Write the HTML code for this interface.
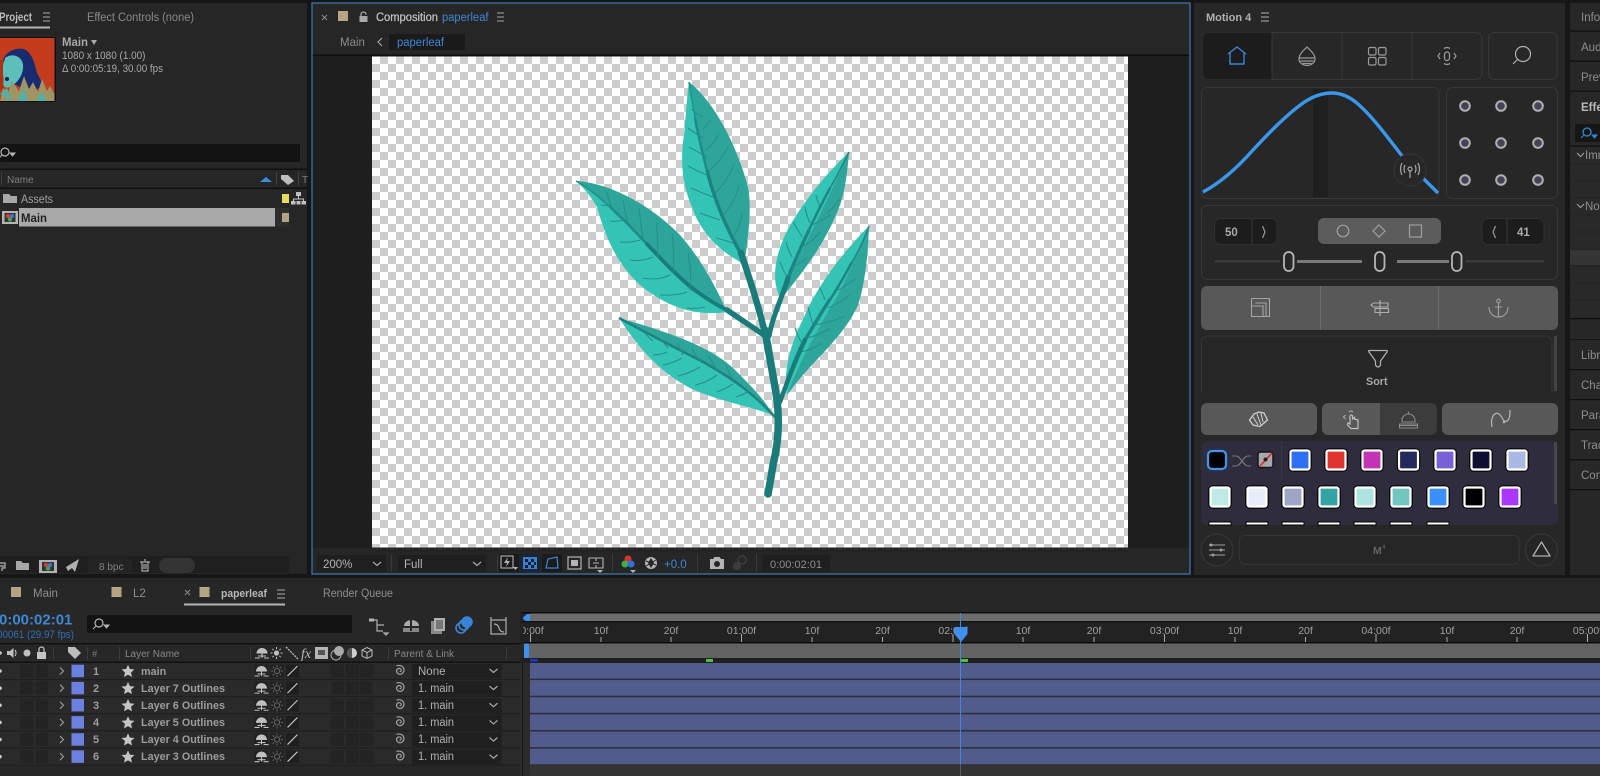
<!DOCTYPE html>
<html lang="en"><head><meta charset="utf-8"><title>After Effects – paperleaf</title>
<style>
html,body{margin:0;padding:0;background:#141414;width:1600px;height:776px;overflow:hidden}
#root{position:relative;width:1600px;height:776px;filter:blur(.35px)}
#root svg{position:absolute;left:0;top:0;display:block}
text{font-family:"Liberation Sans",sans-serif;font-size:11.5px;fill:#a8a8a8}
.b{font-weight:bold}
.s{fill:none;stroke:#b4b4b4;stroke-width:1.2}
.d{fill:none;stroke:#9a9a9a;stroke-width:1.2}
.tk{fill:#a0a0a0;font-size:10.5px;text-anchor:middle}
.hd{fill:#888;font-size:10px}
</style></head><body><div id="root">
<svg width="1600" height="776" viewBox="0 0 1600 776" xmlns="http://www.w3.org/2000/svg">
<defs>
<pattern id="chk" x="372" y="56" width="16" height="16" patternUnits="userSpaceOnUse"><rect width="16" height="16" fill="#fff"/><rect x="8" width="8" height="8" fill="#cdcdcd"/><rect y="8" width="8" height="8" fill="#cdcdcd"/></pattern>
<clipPath id="rulerclip"><rect x="523" y="622" width="1077" height="21"/></clipPath>
<symbol id="shy" viewBox="0 0 14 12" width="14" height="12" overflow="visible"><path d="M1.500 6.500A5.500 5.500 0 0 1 12.500 6.500Z" fill="#c0c0c0"/><path d="M7 1V11M3 9H11M0 11H5M9 11H14" stroke="#c0c0c0" stroke-width="1.100" fill="none"/></symbol>
<symbol id="sun" viewBox="0 0 12 12" width="12" height="12" overflow="visible"><circle cx="6" cy="6" r="2.600" fill="none" stroke="#666"/><path d="M6 0V2M6 10V12M0 6H2M10 6H12M1.800 1.800L3.200 3.200M8.800 8.800L10.200 10.200M1.800 10.200L3.200 8.800M8.800 3.200L10.200 1.800" stroke="#666"/></symbol>
<symbol id="spiral" viewBox="0 0 14 14" width="14" height="14" overflow="visible"><path d="M7 7.500C8.300 8 9.300 6.500 8.500 5.300C7.500 3.800 4.800 4.300 4.200 6.200C3.500 8.600 5.800 10.800 8.300 10.200C11 9.500 12.200 6.500 11 4C9.800 1.600 6.500 .8 4 2" fill="none" stroke="#a0a0a0" stroke-width="1.200"/></symbol>
<symbol id="chev" viewBox="0 0 10 6" width="10" height="6" overflow="visible"><path d="M1 1L5 4.500L9 1" fill="none" stroke="#aaa" stroke-width="1.200"/></symbol>
<g id="row">
<rect x="0" y="0" width="520" height="16" fill="#2a2a2a"/><rect x="0" y="16" width="520" height="1.130" fill="#1e1e1e"/>
<circle cx="0" cy="8" r="1.800" fill="#ccc"/>
<rect x="20" y="1.500" width="13" height="13" fill="#232323"/><rect x="36" y="1.500" width="12" height="13" fill="#232323"/>
<path d="M60 4.500L63.500 8L60 11.500" fill="none" stroke="#a0a0a0" stroke-width="1.100"/>
<rect x="71.500" y="1.700" width="12.500" height="12.500" fill="#6c80e2"/>
<path d="M128 1.800L129.900 6L134.500 6.500L131 9.500L132 14L128 11.700L124 14L125 9.500L121.500 6.500L126.100 6Z" fill="#c4c4c4"/>
<rect x="254" y="1.500" width="14" height="13" fill="#232323"/><use href="#shy" x="254.500" y="2"/>
<rect x="270" y="1.500" width="14" height="13" fill="#232323"/><use href="#sun" x="271" y="2"/>
<rect x="286" y="1.500" width="13" height="13" fill="#1f1f1f"/><path d="M287.500 13L297.500 3" stroke="#c0c0c0" stroke-width="1.200"/>
<rect x="331" y="1.500" width="13" height="13" fill="#232323"/><rect x="346" y="1.500" width="13" height="13" fill="#232323"/><rect x="360" y="1.500" width="13" height="13" fill="#232323"/>
<use href="#spiral" x="392.500" y="1"/>
<rect x="412" y="1" width="89.500" height="14.500" fill="#1f1f1f"/><use href="#chev" x="488.500" y="5"/>
</g>
</defs>

<!-- base -->
<rect width="1600" height="776" fill="#161616"/>

<!-- PROJECT PANEL -->
<g>
<rect x="0" y="3" width="307" height="571" fill="#262626"/>
<text x="-1" y="21" class="b" style="fill:#bcbcbc;font-size:11.500px" textLength="33" lengthAdjust="spacingAndGlyphs">Project</text>
<path d="M43 13H50M43 17H50M43 21H50" stroke="#a8a8a8" stroke-width="1.100"/>
<rect x="0" y="26.500" width="50" height="2" fill="#b4b4b4"/>
<text x="87" y="21" style="fill:#8a8a8a;font-size:11.500px" textLength="107" lengthAdjust="spacingAndGlyphs">Effect Controls (none)</text>
<!-- thumbnail -->
<rect x="0" y="37" width="56" height="65" fill="#0f0f0f"/>
<rect x="0" y="38" width="54.500" height="63" fill="#c43c1c"/>
<path d="M3 60C6 51 18 46 26 50C33 55 35 65 37 73L44 86L30 92L14 84Z" fill="#182a70"/>
<path d="M5 58C11 53 21 55 23 64C24 74 18 83 10 87C5 89 2 86 4 80L2 70Z" fill="#5cbfb9"/>
<rect x="0" y="60" width="3" height="30" fill="#a8351a"/>
<path d="M0 101L3 88L8 93L12 81L19 91L24 76L29 89L33 82L38 92L42 79L47 91L50 86L54.500 94V101Z" fill="#9f9463"/>
<path d="M0 94L7 88L12 101ZM17 101L24 88L28 101ZM36 101L41 92L47 101Z" fill="#52b0aa"/>
<circle cx="7" cy="79" r="2" fill="#10214f"/>
<text x="62" y="46" class="b" style="fill:#a8a8a8;font-size:11.500px" textLength="26" lengthAdjust="spacingAndGlyphs">Main</text>
<path d="M91 40H97L94 45Z" fill="#a8a8a8"/>
<text x="62" y="59" style="fill:#a8a8a8;font-size:11px" textLength="83.500" lengthAdjust="spacingAndGlyphs">1080 x 1080 (1.00)</text>
<text x="62" y="72" style="fill:#a8a8a8;font-size:11px" textLength="101" lengthAdjust="spacingAndGlyphs">Δ 0:00:05:19, 30.00 fps</text>
<rect x="0" y="144" width="300" height="18" rx="1.500" fill="#131313"/>
<circle cx="5" cy="152" r="4" class="d" style="stroke:#b5b5b5"/><path d="M2 155L-1 158M10 153H15L12.500 156Z" stroke="#b5b5b5" fill="#b5b5b5" stroke-width="1"/>
<rect x="0" y="168.500" width="307" height="1.500" fill="#101010"/>
<rect x="0" y="187.500" width="307" height="1.500" fill="#101010"/>
<rect x="1" y="172" width="1" height="14" fill="#3c3c3c"/>
<text x="7" y="183" style="fill:#7e7e7e;font-size:10px">Name</text>
<path d="M260 182L266 177L272 182Z" fill="#3b8ee0"/>
<rect x="276" y="172" width="1" height="14" fill="#404040"/>
<path d="M281 175L288 175L294 181L288 185L281 179Z" fill="#bdbdbd"/>
<rect x="298" y="172" width="1" height="14" fill="#404040"/>
<text x="302" y="183" style="fill:#7e7e7e;font-size:10px">T</text>
<!-- rows -->
<path d="M3 194H9L11 196H17V203H3Z" fill="#a8a8a8"/>
<text x="21" y="203" style="fill:#a0a0a0;font-size:11.500px" textLength="32" lengthAdjust="spacingAndGlyphs">Assets</text>
<rect x="282" y="194" width="7" height="9" fill="#e8d95a"/>
<rect x="296" y="192" width="5" height="4" fill="#c0c0c0"/><path d="M298.500 196V199M293.500 201V199H303.500V201" stroke="#c0c0c0" fill="none" stroke-width="1"/>
<rect x="291" y="201" width="4.500" height="3.500" fill="#c0c0c0"/><rect x="296.500" y="201" width="4" height="3.500" fill="#c0c0c0"/><rect x="301.500" y="201" width="4.500" height="3.500" fill="#c0c0c0"/>
<rect x="19" y="208" width="256" height="18.500" fill="#a9a9a9"/>
<rect x="275" y="208" width="14" height="18.500" fill="#2e2e2e"/>
<rect x="282" y="213" width="7" height="9" fill="#b3a283"/>
<rect x="2" y="211" width="16" height="13" fill="#b4b4b4"/><rect x="4.500" y="213" width="11" height="9" fill="#333"/>
<circle cx="8" cy="216" r="2.200" fill="#d23c33"/><circle cx="12" cy="216" r="2.200" fill="#3c74d2"/><circle cx="10" cy="219.500" r="2.200" fill="#3ca854"/>
<text x="21" y="222" class="b" style="fill:#222;font-size:11.500px" textLength="26" lengthAdjust="spacingAndGlyphs">Main</text>
<!-- bottom bar -->
<rect x="0" y="556" width="289" height="17" fill="#1f1f1f"/>
<path d="M-1 563H5V568H2V571M-1 566H4" class="s"/>
<path d="M16 561H21L23 563H29V570H16Z" fill="#a8a8a8"/>
<rect x="39" y="560" width="18" height="13" fill="#b0b0b0"/><rect x="42" y="562" width="12" height="9" fill="#333"/>
<circle cx="46" cy="565" r="2.200" fill="#d23c33"/><circle cx="50" cy="565" r="2.200" fill="#3c74d2"/><circle cx="48" cy="568.500" r="2.200" fill="#3ca854"/>
<path d="M66 567L79 559L75 572L72 568L68 571Z" fill="#b0b0b0"/>
<rect x="88" y="559" width="44" height="14" fill="#242424"/>
<text x="99" y="570" style="fill:#808080;font-size:10px">8 bpc</text>
<path d="M140 562H150M142 562V571H148V562M144 560H146M144 564V569M146 564V569" class="s" style="stroke:#aaa"/>
<rect x="159" y="558" width="36" height="15" rx="7.500" fill="#343434"/>
</g>

<!-- COMPOSITION PANEL -->
<g>
<rect x="312" y="3" width="878" height="571" fill="#1e1e1e"/>
<rect x="312" y="3" width="878" height="52" fill="#262626"/>
<rect x="312" y="54.500" width="878" height="1.500" fill="#0e0e0e"/>
<path d="M322 15L327 20M327 15L322 20" stroke="#8a8a8a" stroke-width="1"/>
<rect x="338" y="11" width="10" height="10" fill="#b5a585"/>
<path d="M361 17V14.500A2.500 2.500 0 0 1 366 14.500" fill="none" stroke="#a8a8a8" stroke-width="1.300"/><rect x="359.500" y="16" width="8" height="6" fill="#a8a8a8"/>
<text x="376" y="21" style="fill:#c0c0c0;stroke:#c0c0c0;stroke-width:.25;font-size:11.500px" textLength="62" lengthAdjust="spacingAndGlyphs">Composition</text>
<text x="442" y="21" style="fill:#3e87d4;font-size:11.500px" textLength="46.500" lengthAdjust="spacingAndGlyphs">paperleaf</text>
<path d="M497 13H504M497 17H504M497 21H504" stroke="#a8a8a8" stroke-width="1.100"/>
<text x="340" y="46" style="fill:#8a8a8a;font-size:11.500px">Main</text>
<path d="M382 38L378 42L382 46" fill="none" stroke="#a8a8a8" stroke-width="1.100"/>
<rect x="389" y="34" width="76" height="16" fill="#1a1a1a"/>
<text x="397" y="46" style="fill:#3e87d4;font-size:11.500px" textLength="47" lengthAdjust="spacingAndGlyphs">paperleaf</text>
<!-- canvas -->
<rect x="372" y="56.500" width="756" height="491" fill="url(#chk)"/>
<!-- leaves -->
<g>
<!-- top leaf -->
<path d="M689 82C712 100 735 140 748 187C751 205 750 228 744 264C720 252 700 232 692 207C682 185 680 160 684 135C686 115 687 95 689 82Z" fill="#34c4b6"/>
<path d="M689 82C712 100 735 140 748 187C751 205 750 228 744 264C730 240 718 210 708 175C700 145 694 110 689 82Z" fill="#2ea59b"/>
<path d="M689 82C691 95 693 108 696 122" fill="none" stroke="#22908b" stroke-width="1.500"/>
<path d="M695 118C698 135 703 155 708 175" fill="none" stroke="#1f8a86" stroke-width="2.500"/>
<path d="M707 170C714 200 728 232 742 255" fill="none" stroke="#1d8380" stroke-width="3.500"/>
<g fill="none" stroke="#249089" stroke-width="1.100">
<path d="M703 117Q697 114 691 109M704 138Q696 134 688 128M707 157Q698 152 689 147M707 175Q697 171 688 166M713 197Q702 193 691 188M720 220Q708 216 700 213M733 243Q724 240 716 238M703 130Q707 125 710 120M706 150Q715 143 719 133M708 172Q720 162 728 147M715 193Q729 180 734 163M723 215Q735 203 739 185M733 237Q741 225 742 213"/>
</g>
<!-- left leaf -->
<path d="M576 181C610 183 650 205 680 235C700 258 715 285 727 312C700 316 670 310 640 285C615 262 605 235 597 207C590 195 583 187 576 181Z" fill="#34c4b6"/>
<path d="M576 181C610 183 650 205 680 235C700 258 715 285 727 312L690 290C670 270 650 250 627 225C610 208 590 190 576 181Z" fill="#2ea59b"/>
<path d="M576 181C590 189 602 199 612 209" fill="none" stroke="#22908b" stroke-width="1.500"/>
<path d="M610 207C620 216 632 228 648 245" fill="none" stroke="#1f8a86" stroke-width="2.500"/>
<path d="M646 243C664 262 690 292 727 310" fill="none" stroke="#1a7c7a" stroke-width="3.800"/>
<g fill="none" stroke="#249089" stroke-width="1.100">
<path d="M615 213Q609 204 607 192M628 223Q625 212 623 200M643 240Q641 225 639 208M658 257Q658 240 656 222M673 273Q675 255 672 233M690 290Q692 275 688 253M612 205Q607 206 601 205M623 220Q617 222 610 221M640 240Q630 243 620 242M653 257Q641 262 630 260M670 275Q658 281 643 278M687 292Q675 296 660 295M705 307Q697 309 687 308"/>
</g>
<!-- upper right leaf -->
<path d="M849 152C847 175 845 190 840 205C826 242 806 268 781 299C772 284 773 262 785 235C800 205 825 175 849 152Z" fill="#34c4b6"/>
<path d="M849 152C847 175 845 190 840 205C826 242 806 268 781 299L790 275C805 245 830 195 849 152Z" fill="#2ea59b"/>
<!-- lower right leaf -->
<path d="M869 226C868 250 866 280 858 305C842 340 812 360 787 395C783 370 790 345 805 315C820 280 850 245 869 226Z" fill="#34c4b6"/>
<path d="M869 226C868 250 866 280 858 305C842 340 812 360 787 395C800 360 820 325 838 295C850 270 862 245 869 226Z" fill="#2ea59b"/>
<g fill="none" stroke="#249089" stroke-width="1.100">
<path d="M820 207Q817 200 816 195M810 223Q806 214 805 207M802 237Q797 228 793 222M792 257Q788 250 786 242M787 277Q783 270 780 262M827 213Q835 207 840 198M812 225Q823 220 830 215M800 247Q812 243 820 232M793 267Q802 262 807 258"/>
<path d="M825 300Q822 292 820 288M813 325Q810 315 808 307M803 345Q797 335 795 328M838 290Q848 285 856 278M828 308Q840 303 850 295M815 325Q832 322 845 316M807 338Q820 335 830 328M800 352Q812 350 822 343"/>
</g>
<!-- bottom left leaf -->
<path d="M619 318C660 330 710 345 735 370C750 385 765 400 773 415C745 405 715 400 690 388C660 372 640 350 619 318Z" fill="#34c4b6"/>
<path d="M619 318C660 330 710 345 735 370C750 385 765 400 773 415C755 395 735 380 705 363C680 350 650 335 619 318Z" fill="#2ea59b"/>
<path d="M619 318C650 335 680 350 705 363C735 380 755 395 775 417" fill="none" stroke="#1d8380" stroke-width="2.600"/>
<g fill="none" stroke="#249089" stroke-width="1.100">
<path d="M653 341Q648 337 645 333M668 348Q663 342 660 338M683 355Q680 348 677 343M702 363Q695 356 692 348M718 372Q712 362 708 355M733 380Q728 372 726 365M667 352Q660 355 653 355M682 358Q673 363 663 365M700 367Q690 373 678 376M717 375Q706 383 695 385M733 384Q725 389 717 392M747 392Q743 395 736 397"/>
</g>
<!-- midribs and stems on top, tapered by stroke width -->
<g fill="none" stroke="#1f8582">
<path d="M849 152C842 166 836 178 829 190" stroke-width="1.500"/>
<path d="M830 188C823 201 815 217 808 232" stroke-width="2.500"/>
<path d="M809 230C802 245 794 262 788 278" stroke-width="3.500"/>
<path d="M869 226C864 240 858 252 851 264" stroke-width="1.500"/>
<path d="M852 262C845 275 838 288 829 301" stroke-width="2.500"/>
<path d="M830 299C822 312 812 328 805 340" stroke-width="3.500"/>
</g>
<g fill="none" stroke="#1a7c7a" stroke-linecap="round">
<path d="M788 278C782 298 773 315 769 336" stroke-width="5"/>
<path d="M805 340C795 360 786 385 780 402" stroke-width="4.500"/>
<path d="M727 310L767 337" stroke-width="5.500"/>
<path d="M741 253C750 280 760 310 766 338" stroke-width="6.500"/>
<path d="M765 330C770 360 775 385 777 400C780 425 778 445 773 465C771 478 769 488 768 494" stroke-width="7.500"/>
</g>
</g>
<!-- toolbar -->
<rect x="312" y="548" width="878" height="26" fill="#262626"/>
<rect x="317" y="555" width="69" height="17" rx="1" fill="#1f1f1f"/>
<text x="323" y="568" style="fill:#b4b4b4;font-size:11.500px">200%</text><use href="#chev" x="372" y="561"/>
<rect x="391" y="555" width="1" height="17" fill="#3a3a3a"/>
<rect x="398" y="555" width="88" height="17" rx="1" fill="#1f1f1f"/>
<text x="404" y="568" style="fill:#b4b4b4;font-size:11.500px">Full</text><use href="#chev" x="472" y="561"/>
<rect x="497" y="554" width="1" height="18" fill="#3a3a3a"/>
<rect x="499" y="554" width="20" height="18" fill="#1a1a1a"/><rect x="501" y="556" width="12" height="12" fill="none" stroke="#b4b4b4" stroke-width="1.100"/><path d="M508 557L504 563H507L506 567L510 561H507Z" fill="#b4b4b4"/><path d="M513 567H518L515.500 570Z" fill="#b4b4b4"/>
<rect x="520" y="554" width="21" height="18" fill="#1a2432"/><rect x="523" y="557" width="14" height="12" fill="#3c7fd0"/><path d="M525 559h3v3h-3zM531 559h3v3h-3zM528 562h3v3h-3zM534 562h2v3h-2zM525 565h3v3h-3zM531 565h3v3h-3z" fill="#16202c"/>
<rect x="542" y="554" width="20" height="18" fill="#1a1a1a"/><path d="M546 568L548 559L557 557L558 568Z" fill="none" stroke="#3c7fd0" stroke-width="1.300"/>
<rect x="568" y="557" width="13" height="12" fill="none" stroke="#b4b4b4" stroke-width="1.200"/><rect x="571" y="560" width="7" height="6" fill="#b4b4b4"/>
<path d="M589 558H603V568H589ZM596 558V561M596 565V568M593 563H599" fill="none" stroke="#b4b4b4" stroke-width="1.100"/><path d="M597 570H603L600 573Z" fill="#b4b4b4"/>
<rect x="612" y="554" width="1" height="18" fill="#3a3a3a"/>
<circle cx="628" cy="559" r="3.500" fill="#d8352e"/><circle cx="625" cy="564" r="3.500" fill="#3fae49"/><circle cx="631" cy="564" r="3.500" fill="#2b6fe0"/><path d="M630 570H636L633 573Z" fill="#b4b4b4"/>
<circle cx="651" cy="563" r="6" fill="#b4b4b4"/><path d="M651 558L654 563L651 568L648 563Z" fill="#262626"/><path d="M646 561L656 565M656 560L646 566" stroke="#262626"/>
<text x="664" y="568" style="fill:#3e87d4;font-size:11.500px">+0.0</text>
<rect x="697" y="554" width="1" height="18" fill="#3a3a3a"/>
<path d="M710 559H713L714.500 557H719.500L721 559H724V569H710Z" fill="#b4b4b4"/><circle cx="717" cy="564" r="3" fill="#262626"/>
<circle cx="742" cy="560" r="4" fill="none" stroke="#3d3d3d" stroke-width="1.500"/><circle cx="737" cy="566" r="4" fill="#3d3d3d"/>
<rect x="756" y="554" width="1" height="18" fill="#3a3a3a"/>
<rect x="762.500" y="555" width="67.500" height="17" fill="#1f1f1f"/>
<text x="770" y="568" style="fill:#8e8e8e;font-size:11px">0:00:02:01</text>
<!-- blue focus frame -->
<rect x="312" y="3" width="878" height="571" fill="none" stroke="#3d72b0" stroke-width="1.300"/>
</g>

<!-- MOTION PANEL -->
<g>
<rect x="1194" y="3" width="371" height="572" fill="#272727"/>
<text x="1206" y="21" class="b" style="fill:#b0b0b0;font-size:11px">Motion 4</text>
<path d="M1261 13H1269M1261 17H1269M1261 21H1269" stroke="#b0b0b0" stroke-width="1.100"/>
<!-- nav -->
<rect x="1202.500" y="32.500" width="279.500" height="47" rx="6" fill="#272727" stroke="#383838"/>
<path d="M1202.500 38.500a6 6 0 0 1 6-6H1272V79.500H1208.500a6 6 0 0 1-6-6Z" fill="#1c1c1c"/>
<path d="M1272 33V79M1342 33V79M1412 33V79" stroke="#383838"/>
<path d="M1228 54L1237 47L1246 54M1230 53V64H1244V53" fill="none" stroke="#3a84d8" stroke-width="1.400"/>
<path d="M1307 47C1304 50 1299 54 1299 59A8 6.500 0 0 0 1315 59C1315 54 1310 50 1307 47Z" class="d"/><path d="M1299.500 58H1314.500M1300.500 61H1313.500M1302.500 63.500H1311.500" class="d"/>
<rect x="1368.500" y="47.500" width="7.500" height="7.500" rx="1.500" class="d"/><rect x="1378.500" y="47.500" width="7.500" height="7.500" rx="1.500" class="d"/><rect x="1368.500" y="57.500" width="7.500" height="7.500" rx="1.500" class="d"/><rect x="1378.500" y="57.500" width="7.500" height="7.500" rx="1.500" class="d"/>
<rect x="1444.500" y="52" width="5" height="8.500" rx="2.500" class="d"/><path d="M1440 53L1438 56L1440 59M1454 53L1456 56L1454 59M1444 48.500Q1447 46.500 1450 48.500M1444 63.500Q1447 65.500 1450 63.500" class="d"/>
<rect x="1488.500" y="32.500" width="68.500" height="47" rx="6" fill="#272727" stroke="#383838"/>
<circle cx="1523" cy="54" r="7.500" class="s" style="stroke:#b0b0b0"/><path d="M1517.500 59.500L1513 64" class="s" style="stroke:#b0b0b0"/>
<!-- graph -->
<rect x="1201.500" y="87.500" width="237.500" height="111" rx="6" fill="#272727" stroke="#383838"/>
<rect x="1313" y="89" width="15" height="108" fill="#1f1f1f"/>
<path d="M1203 192C1220 183 1237 168 1253 150C1268 134 1285 116 1303 103C1313 96 1323 93 1332 93C1342 93 1350 97 1358 104C1375 119 1390 141 1403 157C1414 170 1427 182 1438 193" fill="none" stroke="#3a97ea" stroke-width="3.400"/>
<circle cx="1410" cy="170" r="16" fill="#272727" stroke="#363636"/>
<circle cx="1410" cy="169" r="2" class="d" style="stroke:#a8a8a8"/><path d="M1410 171V178M1405 165Q1403 169 1405 173M1415 165Q1417 169 1415 173M1402 163Q1399 169 1402 175M1418 163Q1421 169 1418 175" class="d" style="stroke:#a8a8a8"/>
<rect x="1446.500" y="87.500" width="111" height="111" rx="6" fill="#272727" stroke="#383838"/>
<g fill="#454258" stroke="#b0b0b0" stroke-width="2">
<circle cx="1465" cy="106" r="4.800"/><circle cx="1501" cy="106" r="4.800"/><circle cx="1538" cy="106" r="4.800"/>
<circle cx="1465" cy="143" r="4.800"/><circle cx="1501" cy="143" r="4.800"/><circle cx="1538" cy="143" r="4.800"/>
<circle cx="1465" cy="180" r="4.800"/><circle cx="1501" cy="180" r="4.800"/><circle cx="1538" cy="180" r="4.800"/>
</g>
<!-- sliders -->
<rect x="1201.500" y="205.500" width="356" height="74" rx="6" fill="#272727" stroke="#383838"/>
<rect x="1214.500" y="218.500" width="62.500" height="26" rx="6" fill="#1c1c1c" stroke="#303030"/>
<path d="M1252 219V244" stroke="#383838"/><text x="1225" y="236" class="b" style="fill:#aaa;font-size:11.500px">50</text><path d="M1262.500 226L1265 232L1262.500 238" class="d"/>
<rect x="1318" y="218" width="123" height="26" rx="6" fill="#5c5c5c"/>
<circle cx="1343" cy="231" r="5.800" fill="none" stroke="#a0a0a0" stroke-width="1.200"/>
<path d="M1379 225L1385 231L1379 237L1373 231Z" fill="none" stroke="#a0a0a0" stroke-width="1.200"/>
<rect x="1409.500" y="225" width="12" height="12" fill="none" stroke="#a0a0a0" stroke-width="1.200"/>
<rect x="1482" y="218.500" width="62" height="26" rx="6" fill="#1c1c1c" stroke="#303030"/>
<path d="M1507 219V244" stroke="#383838"/><path d="M1495.500 226L1493 232L1495.500 238" class="d"/><text x="1517" y="236" class="b" style="fill:#aaa;font-size:11.500px">41</text>
<rect x="1215" y="260" width="65" height="2.500" fill="#3c3c3c"/>
<rect x="1297" y="260" width="65" height="3" fill="#7a7a7a"/>
<rect x="1397" y="260" width="52" height="3" fill="#7a7a7a"/>
<rect x="1466" y="260" width="78" height="2.500" fill="#3c3c3c"/>
<rect x="1284" y="252" width="9.500" height="19" rx="4.700" fill="none" stroke="#b5b5b5" stroke-width="1.800"/>
<rect x="1375" y="252" width="9.500" height="19" rx="4.700" fill="none" stroke="#b5b5b5" stroke-width="1.800"/>
<rect x="1452" y="252" width="9.500" height="19" rx="4.700" fill="none" stroke="#b5b5b5" stroke-width="1.800"/>
<!-- 3 buttons -->
<rect x="1201" y="286" width="357" height="44" rx="6" fill="#585858"/>
<path d="M1320.500 286V330M1438.500 286V330" stroke="#6c6c6c"/>
<path d="M1251.500 299.500Q1251.500 298.500 1252.500 298.500H1269.500V316.500H1251.500ZM1251.500 306H1263V316.500M1255.500 303H1266V316.500" fill="none" stroke="#a4a4a4" stroke-width="1.100"/>
<path d="M1380 300V316M1373.500 303H1388V307H1373.500L1371 305ZM1375 308.500H1388.500V312.500H1375Z" fill="none" stroke="#b0b0b0" stroke-width="1.100"/>
<circle cx="1498.500" cy="301" r="1.800" fill="none" stroke="#a0a0a0" stroke-width="1.100"/><path d="M1498.500 303V317M1495 307H1502M1489 307C1489 313 1493 317 1498.500 317C1504 317 1508 313 1508 307" fill="none" stroke="#a0a0a0" stroke-width="1.100"/>
<!-- sort -->
<path d="M1201.500 392V342a6 6 0 0 1 6-6H1546a6 6 0 0 1 6 6V392" fill="#262626" stroke="#353535"/>
<rect x="1554" y="336" width="3" height="55" fill="#474241"/>
<path d="M1369 350.500H1386.500Q1388 350.500 1387 352L1380.500 361V365Q1378 369 1375.500 365V361L1369 352Q1368 350.500 1369 350.500Z" fill="none" stroke="#b0b0b0" stroke-width="1.200"/>
<text x="1366" y="385" class="b" style="fill:#a8a8a8;font-size:10.800px">Sort</text>
<!-- three row -->
<rect x="1201" y="403" width="116" height="32" rx="6" fill="#585858"/>
<path d="M1249.500 420L1254 414L1259 412L1264 413L1267.500 420L1260 426.500L1253 425Z" fill="none" stroke="#d0d0d0" stroke-width="1.300" stroke-linejoin="round"/><path d="M1253 417L1258 425M1257 414L1261 425M1261 413L1263 422" stroke="#d0d0d0" stroke-width="1" fill="none"/>
<rect x="1322" y="403" width="115" height="32" rx="6" fill="#3c3c3c"/>
<path d="M1328 403H1380V435H1328a6 6 0 0 1-6-6V409a6 6 0 0 1 6-6Z" fill="#585858"/>
<path d="M1345.500 415L1343.500 417L1345.500 419M1349 412Q1351 410 1353 412" fill="none" stroke="#b0b0b0" stroke-width="1"/>
<path d="M1350 416V424L1348 423L1347.500 425L1351 428.500H1358V420L1354.500 419V417.500L1352.500 419V416Q1351 414 1350 416Z" fill="none" stroke="#c0c0c0" stroke-width="1.200"/>
<path d="M1402 420.500A6.500 6.500 0 0 1 1415 420.500V422H1402ZM1400 425.500H1417M1399.500 428H1417.500V424H1399.500ZM1408.500 414V411.500" fill="none" stroke="#8c8c8c" stroke-width="1.100"/>
<rect x="1442" y="403" width="116" height="32" rx="6" fill="#585858"/>
<path d="M1492 427C1490 417 1495 411 1499 414C1503 417 1503 423 1507 421C1510 419 1510 414 1510 410" fill="none" stroke="#b0b0b0" stroke-width="1.300"/><circle cx="1504" cy="422" r="1.300" fill="#b0b0b0"/>
<!-- swatch area -->
<path d="M1201 447a6 6 0 0 1 6-6H1552a6 6 0 0 1 6 6V519a6 6 0 0 1-6 6H1207a6 6 0 0 1-6-6Z" fill="#2f2c3d"/>
<rect x="1554" y="442" width="3" height="62" fill="#4a4648"/>
<rect x="1208" y="451" width="18" height="18" rx="4" fill="#000" stroke="#3d97ee" stroke-width="2.200"/>
<path d="M1232 456H1236C1241 456 1243 466 1248 466H1251M1232 466H1236C1241 466 1243 456 1248 456H1251" fill="none" stroke="#757575" stroke-width="1.100"/>
<rect x="1258" y="452" width="15" height="15.500" rx="2.500" fill="#a8a8ad" stroke="#161616" stroke-width="1.500"/><path d="M1260 466L1272 453" stroke="#d82a2a" stroke-width="1.500"/><circle cx="1265.500" cy="459.500" r="2" fill="#222"/>
<rect x="1281" y="441" width="1" height="38" fill="#3a3748"/>
<g fill="none" stroke="#000" stroke-width="1.500">
<rect x="1289" y="449" width="22" height="22" rx="4"/><rect x="1325" y="449" width="22" height="22" rx="4"/><rect x="1361" y="449" width="22" height="22" rx="4"/><rect x="1397.500" y="449" width="22" height="22" rx="4"/><rect x="1434" y="449" width="22" height="22" rx="4"/><rect x="1470" y="449" width="22" height="22" rx="4"/><rect x="1506" y="449" width="22" height="22" rx="4"/>
<rect x="1209" y="486" width="22" height="22" rx="4"/><rect x="1246" y="486" width="22" height="22" rx="4"/><rect x="1282" y="486" width="22" height="22" rx="4"/><rect x="1318" y="486" width="22" height="22" rx="4"/><rect x="1354" y="486" width="22" height="22" rx="4"/><rect x="1390" y="486" width="22" height="22" rx="4"/><rect x="1427" y="486" width="22" height="22" rx="4"/><rect x="1463" y="486" width="22" height="22" rx="4"/><rect x="1499" y="486" width="22" height="22" rx="4"/>
</g>
<g stroke="#fff" stroke-width="2.200">
<rect x="1290.500" y="450.500" width="19" height="19" rx="2" fill="#2f6ff5"/>
<rect x="1326.500" y="450.500" width="19" height="19" rx="2" fill="#e0342e"/>
<rect x="1362.500" y="450.500" width="19" height="19" rx="2" fill="#c234b4"/>
<rect x="1399" y="450.500" width="19" height="19" rx="2" fill="#232a5c"/>
<rect x="1435.500" y="450.500" width="19" height="19" rx="2" fill="#7a60d8"/>
<rect x="1471.500" y="450.500" width="19" height="19" rx="2" fill="#0c0f33"/>
<rect x="1507.500" y="450.500" width="19" height="19" rx="2" fill="#aab8e6"/>
<rect x="1210.500" y="487.500" width="19" height="19" rx="2" fill="#bfeae6"/>
<rect x="1247.500" y="487.500" width="19" height="19" rx="2" fill="#e9ecf9"/>
<rect x="1283.500" y="487.500" width="19" height="19" rx="2" fill="#9ea4c6"/>
<rect x="1319.500" y="487.500" width="19" height="19" rx="2" fill="#35a3a3"/>
<rect x="1355.500" y="487.500" width="19" height="19" rx="2" fill="#aee4df"/>
<rect x="1391.500" y="487.500" width="19" height="19" rx="2" fill="#72c6c0"/>
<rect x="1428.500" y="487.500" width="19" height="19" rx="2" fill="#3a8ff8"/>
<rect x="1464.500" y="487.500" width="19" height="19" rx="2" fill="#000"/>
<rect x="1500.500" y="487.500" width="19" height="19" rx="2" fill="#a938fb"/>
</g>
<g fill="#fff" stroke="#000"><rect x="1209" y="522" width="22" height="3"/><rect x="1246" y="522" width="22" height="3"/><rect x="1282" y="522" width="22" height="3"/><rect x="1318" y="522" width="22" height="3"/><rect x="1354" y="522" width="22" height="3"/><rect x="1390" y="522" width="22" height="3"/><rect x="1427" y="522" width="22" height="3"/></g>
<!-- footer -->
<circle cx="1217" cy="550" r="16" fill="#262626" stroke="#3a3a3a"/>
<path d="M1209 545H1225M1209 550H1225M1209 555H1225" stroke="#a0a0a0" stroke-width="1.100"/><circle cx="1211" cy="545" r="1.500" fill="#a0a0a0"/><circle cx="1221" cy="550" r="1.500" fill="#a0a0a0"/><circle cx="1213" cy="555" r="1.500" fill="#a0a0a0"/>
<rect x="1239.500" y="535.500" width="279.500" height="29" rx="6" fill="#262626" stroke="#363636"/>
<text x="1373" y="554" class="b" style="fill:#656565;font-size:10.500px">M</text><text x="1382" y="549" style="fill:#656565;font-size:6px">4</text>
<circle cx="1541.500" cy="550" r="16" fill="#262626" stroke="#3a3a3a"/>
<path d="M1541.500 542L1533 556H1550Z" fill="none" stroke="#b0b0b0" stroke-width="1.300" stroke-linejoin="round"/>
</g>

<!-- RIGHT TAB COLUMN -->
<g>
<rect x="1570" y="3" width="30" height="572" fill="#272727"/>
<g fill="#0f0f0f"><rect x="1570" y="30.500" width="30" height="1.300"/><rect x="1570" y="60.500" width="30" height="1.300"/><rect x="1570" y="90.500" width="30" height="1.300"/><rect x="1570" y="145.500" width="30" height="1.300"/><rect x="1570" y="318" width="30" height="1.300"/><rect x="1570" y="339" width="30" height=".8"/><rect x="1570" y="369" width="30" height="1.300"/><rect x="1570" y="399" width="30" height="1.300"/><rect x="1570" y="429" width="30" height="1.300"/><rect x="1570" y="459" width="30" height="1.300"/><rect x="1570" y="489" width="30" height="1.300"/></g>
<text x="1581" y="21" style="fill:#8e8e8e;font-size:11.500px">Info</text>
<text x="1581" y="51" style="fill:#8e8e8e;font-size:11.500px">Audio</text>
<text x="1581" y="81" style="fill:#8e8e8e;font-size:11.500px">Preview</text>
<text x="1581" y="111" class="b" style="fill:#b8b8b8;font-size:11.500px">Effects</text>
<rect x="1575" y="124" width="25" height="18" fill="#161616"/>
<circle cx="1587" cy="132" r="4" fill="none" stroke="#3a84d8" stroke-width="1.300"/><path d="M1584 135L1581 138M1592 135H1597L1594.500 138Z" stroke="#3a84d8" fill="#3a84d8"/>
<rect x="1570" y="147" width="30" height="170" fill="#292929"/>
<path d="M1570 164H1600M1570 181H1600M1570 198H1600M1570 215H1600M1570 232H1600M1570 249H1600M1570 266H1600M1570 283H1600M1570 300H1600" stroke="#232323" stroke-width=".8"/>
<path d="M1577 153L1580.500 156.500L1584 153" class="d"/><text x="1585" y="159" style="fill:#8e8e8e;font-size:11.500px">Immersive</text>
<path d="M1577 204L1580.500 207.500L1584 204" class="d"/><text x="1585" y="210" style="fill:#8e8e8e;font-size:11.500px">Noise</text>
<rect x="1570" y="250" width="30" height="15" fill="#353535"/>
<text x="1581" y="359" style="fill:#8e8e8e;font-size:11.500px">Libraries</text>
<text x="1581" y="389" style="fill:#8e8e8e;font-size:11.500px">Character</text>
<text x="1581" y="419" style="fill:#8e8e8e;font-size:11.500px">Paragraph</text>
<text x="1581" y="449" style="fill:#8e8e8e;font-size:11.500px">Tracker</text>
<text x="1581" y="479" style="fill:#8e8e8e;font-size:11.500px">Content</text>
</g>

<!-- TIMELINE -->
<g>
<rect x="0" y="578" width="1600" height="198" fill="#272727"/>
<rect x="11" y="587" width="10" height="10" fill="#b5a585"/><text x="33" y="597" style="fill:#8e8e8e;font-size:11.500px">Main</text>
<rect x="111.500" y="587" width="10" height="10" fill="#b5a585"/><text x="133" y="597" style="fill:#8e8e8e;font-size:11.500px">L2</text>
<path d="M185 590L190 595M190 590L185 595" stroke="#8a8a8a"/>
<rect x="199.500" y="587" width="10" height="10" fill="#b5a585"/>
<text x="221" y="597" class="b" style="fill:#b8b8b8;font-size:11px" textLength="46" lengthAdjust="spacingAndGlyphs">paperleaf</text>
<path d="M277 590H285M277 594H285M277 598H285" stroke="#a8a8a8" stroke-width="1.100"/>
<rect x="184" y="603.500" width="101" height="2" fill="#b4b4b4"/>
<text x="323" y="597" style="fill:#8e8e8e;font-size:11.500px" textLength="70" lengthAdjust="spacingAndGlyphs">Render Queue</text>
<text x="-1" y="624.500" class="b" style="fill:#3e87d4;font-size:15px">0:00:02:01</text>
<text x="-3" y="638" style="fill:#2f6fb4;font-size:11px" textLength="77" lengthAdjust="spacingAndGlyphs">00061 (29.97 fps)</text>
<rect x="87" y="615" width="265" height="18" rx="1.500" fill="#131313"/>
<circle cx="99" cy="623" r="4" class="d" style="stroke:#b5b5b5"/><path d="M96 626L93 629M104 625H109L106.500 628Z" stroke="#b5b5b5" fill="#b5b5b5"/>
<path d="M372 620H377V631H383M377 625H384M384 633H388L386 635Z" fill="none" stroke="#b0b0b0" stroke-width="1.200"/><rect x="369" y="618.500" width="5" height="3" fill="#b0b0b0"/>
<path d="M404 626A7.500 6 0 0 1 419 626Z" fill="#aaa"/><rect x="403" y="628" width="16" height="4" fill="#888"/><rect x="410" y="620" width="2" height="11" fill="#272727"/>
<rect x="431" y="621" width="11" height="13" fill="#888"/><rect x="434" y="618" width="11" height="13" fill="#b0b0b0"/><rect x="436" y="620" width="7" height="9" fill="#777"/>
<g fill="none" stroke="#3a84d8" stroke-width="1.600"><circle cx="461" cy="628" r="5"/><circle cx="464" cy="625" r="5"/><circle cx="467" cy="622" r="5" fill="#3a84d8"/></g>
<rect x="491" y="620" width="15" height="14" fill="none" stroke="#b0b0b0" stroke-width="1.200"/><path d="M491 620V617M506 620V617M494 624Q498 624 499 628T504 632" fill="none" stroke="#b0b0b0" stroke-width="1.200"/>
<!-- header -->
<rect x="0" y="643" width="520" height="1.500" fill="#111"/>
<rect x="0" y="661.500" width="520" height="1.500" fill="#111"/>
<circle cx="0" cy="653" r="1.800" fill="#ccc"/>
<path d="M7 651H10L13.500 648V658L10 655H7Z" fill="#c0c0c0"/><path d="M15 650Q17 653 15 656" class="s"/>
<circle cx="27" cy="653" r="3.500" fill="#c0c0c0"/>
<rect x="37" y="652" width="9" height="7" fill="#c4c4c4"/><path d="M39 652V649.500A2.500 2.500 0 0 1 44 649.500V652" fill="none" stroke="#c4c4c4" stroke-width="1.200"/>
<rect x="53" y="647" width="1" height="13" fill="#3c3c3c"/>
<path d="M68 647H75L81 653L75 659L68 652Z" fill="#bdbdbd"/>
<rect x="87" y="647" width="1" height="13" fill="#3c3c3c"/>
<text x="92" y="657" style="fill:#808080;font-size:9px;font-style:italic">#</text>
<rect x="119" y="647" width="1" height="13" fill="#3c3c3c"/>
<text x="125" y="657" class="hd">Layer Name</text>
<rect x="250" y="647" width="1" height="13" fill="#3c3c3c"/>
<use href="#shy" x="255" y="647"/>
<g transform="translate(270.500 647)"><circle cx="6" cy="6" r="2.600" fill="#c0c0c0"/><path d="M6 0V2M6 10V12M0 6H2M10 6H12M1.800 1.800L3.200 3.200M8.800 8.800L10.200 10.200M1.800 10.200L3.200 8.800M8.800 3.200L10.200 1.800" stroke="#c0c0c0"/></g>
<path d="M286 647L298 659" stroke="#b8b8b8" stroke-width="1.400" stroke-dasharray="2 1"/>
<text x="301" y="658" style="fill:#b8b8b8;font-size:14px;font-family:'Liberation Serif',serif;font-style:italic">fx</text>
<rect x="315" y="647" width="13" height="12" fill="#b4b4b4"/><rect x="318" y="650" width="7" height="5" fill="#555"/>
<circle cx="336" cy="655" r="5" fill="none" stroke="#aaa"/><circle cx="339" cy="651" r="5" fill="#aaa"/>
<circle cx="352" cy="653" r="5" fill="#d0d0d0"/><path d="M352 648A5 5 0 0 0 352 658Z" fill="#555"/>
<path d="M367 647.500L372 650V656L367 658.500L362 656V650ZM362 650L367 652.500L372 650M367 652.500V658.500" fill="none" stroke="#b8b8b8"/>
<rect x="388" y="647" width="1" height="13" fill="#3c3c3c"/>
<text x="394" y="657" class="hd">Parent &amp; Link</text>
<rect x="506" y="647" width="1" height="13" fill="#3c3c3c"/>
<!-- rows -->
<use href="#row" y="663"/><use href="#row" y="680.130"/><use href="#row" y="697.260"/><use href="#row" y="714.390"/><use href="#row" y="731.520"/><use href="#row" y="748.650"/>
<g>
<text x="93" y="675" class="b" style="fill:#9c9c9c;font-size:11px">1</text><text x="141" y="675" class="b" style="fill:#9c9c9c;font-size:10.800px">main</text>
<text x="93" y="692" class="b" style="fill:#9c9c9c;font-size:11px">2</text><text x="141" y="692" class="b" style="fill:#9c9c9c;font-size:10.800px">Layer 7 Outlines</text>
<text x="93" y="709" class="b" style="fill:#9c9c9c;font-size:11px">3</text><text x="141" y="709" class="b" style="fill:#9c9c9c;font-size:10.800px">Layer 6 Outlines</text>
<text x="93" y="726" class="b" style="fill:#9c9c9c;font-size:11px">4</text><text x="141" y="726" class="b" style="fill:#9c9c9c;font-size:10.800px">Layer 5 Outlines</text>
<text x="93" y="743" class="b" style="fill:#9c9c9c;font-size:11px">5</text><text x="141" y="743" class="b" style="fill:#9c9c9c;font-size:10.800px">Layer 4 Outlines</text>
<text x="93" y="760" class="b" style="fill:#9c9c9c;font-size:11px">6</text><text x="141" y="760" class="b" style="fill:#9c9c9c;font-size:10.800px">Layer 3 Outlines</text>
</g>
<text x="418" y="675" style="fill:#b0b0b0;font-size:11.500px">None</text>
<text x="418" y="692" style="fill:#b0b0b0;font-size:11.500px" textLength="36" lengthAdjust="spacingAndGlyphs">1. main</text>
<text x="418" y="709" style="fill:#b0b0b0;font-size:11.500px" textLength="36" lengthAdjust="spacingAndGlyphs">1. main</text>
<text x="418" y="726" style="fill:#b0b0b0;font-size:11.500px" textLength="36" lengthAdjust="spacingAndGlyphs">1. main</text>
<text x="418" y="743" style="fill:#b0b0b0;font-size:11.500px" textLength="36" lengthAdjust="spacingAndGlyphs">1. main</text>
<text x="418" y="760" style="fill:#b0b0b0;font-size:11.500px" textLength="36" lengthAdjust="spacingAndGlyphs">1. main</text>
<!-- time ruler -->
<rect x="520" y="612" width="1080" height="32" fill="#222"/>
<rect x="522" y="612" width="1078" height="1.500" fill="#0d0d0d"/>
<rect x="530" y="613.500" width="1070" height="7.500" fill="#6d6d6d"/>
<rect x="522" y="621" width="1078" height="1.200" fill="#111"/>
<path d="M530 614H527Q523 617.500 523 617.500Q523 621 527 621H530Z" fill="#3f91ee"/>
<g clip-path="url(#rulerclip)">
<text class="tk" x="532" y="634">0:00f</text><text class="tk" x="601" y="634">10f</text><text class="tk" x="671" y="634">20f</text><text class="tk" x="741.500" y="634">01:00f</text><text class="tk" x="812" y="634">10f</text><text class="tk" x="882.500" y="634">20f</text><text class="tk" x="953" y="634">02:00f</text><text class="tk" x="1023" y="634">10f</text><text class="tk" x="1094" y="634">20f</text><text class="tk" x="1164.500" y="634">03:00f</text><text class="tk" x="1235" y="634">10f</text><text class="tk" x="1305.500" y="634">20f</text><text class="tk" x="1376" y="634">04:00f</text><text class="tk" x="1447" y="634">10f</text><text class="tk" x="1517" y="634">20f</text><text class="tk" x="1587.500" y="634">05:00f</text>
</g>
<path d="M530.500 634V642M741.500 634V642M953 634V642M1164.500 634V642M1376 634V642M1587.500 634V642" stroke="#aaa"/>
<path d="M601 637V642M671 637V642M812 637V642M882.500 637V642M1023 637V642M1094 637V642M1235 637V642M1305.500 637V642M1447 637V642M1517 637V642" stroke="#aaa"/>
<rect x="524" y="642" width="1076" height="1.500" fill="#0d0d0d"/>
<rect x="524" y="643.500" width="1076" height="14.500" fill="#636363"/>
<rect x="524" y="643.500" width="5" height="14.500" rx="2" fill="#3f91ee"/>
<rect x="520" y="658" width="1080" height="5" fill="#1f1f1f"/>
<rect x="530" y="659" width="7.500" height="2.800" fill="#1c36c0"/>
<rect x="706" y="659" width="7" height="3" fill="#4fc03a"/>
<rect x="961" y="659" width="7" height="3" fill="#4fc03a"/>
<!-- layer bars -->
<rect x="520" y="663" width="1080" height="113" fill="#333"/>
<rect x="530" y="663" width="1070" height="101.200" fill="#2c2e3a"/>
<rect x="520" y="663" width="10" height="113" fill="#2b2b2b"/>
<rect x="522" y="663" width="1" height="113" fill="#151515"/>
<g fill="#525c8c">
<rect x="530" y="663" width="1070" height="15.600"/>
<rect x="530" y="680.100" width="1070" height="15.600"/>
<rect x="530" y="697.200" width="1070" height="15.600"/>
<rect x="530" y="714.400" width="1070" height="15.600"/>
<rect x="530" y="731.500" width="1070" height="15.600"/>
<rect x="530" y="748.600" width="1070" height="15.600"/>
</g>
<!-- playhead -->
<rect x="960" y="613" width="1" height="151" fill="#3f88dc"/>
<rect x="960" y="764" width="1" height="12" fill="#5a5a5a"/>
<path d="M954.500 627H967.500V634L961 642L954.500 634Z" fill="#4190ee"/>
</g>
</svg>
</div></body></html>
